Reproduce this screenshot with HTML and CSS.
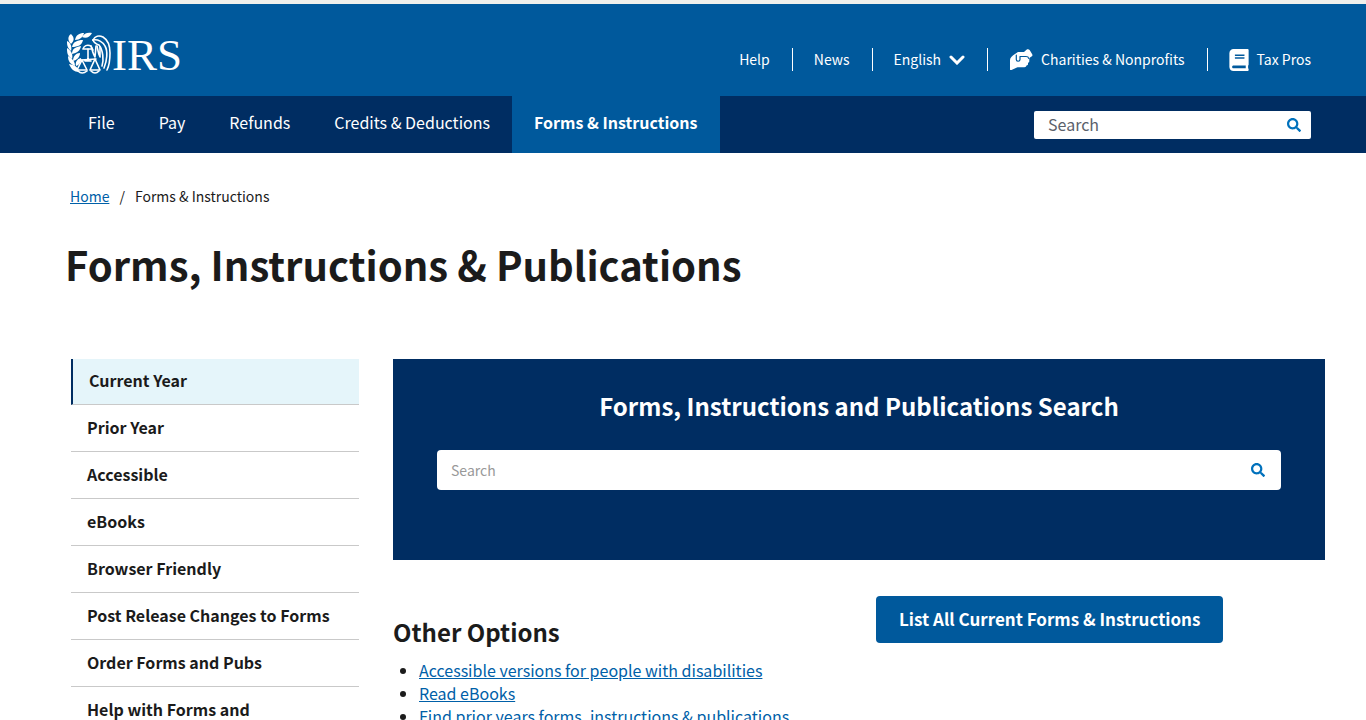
FILE: index.html
```html
<!DOCTYPE html>
<html lang="en">
<head>
  <meta charset="UTF-8" />
  <meta name="viewport" content="width=device-width, initial-scale=1.0"/>
  <title>Forms, Instructions & Publications | Internal Revenue Service</title>
  <link rel="stylesheet" href="styles.css">
</head>
<body>

  <!-- Header -->
  <header class="site-header">
    <a href="#" class="logo" aria-label="IRS home">
      <svg class="logo-mark" viewBox="0 0 44 42" aria-hidden="true">
        <!-- Laurel -->
        <g fill="#fff">
          <path d="M15 5C17 1 21 0 25 1C23 5 19 7 15 5Z"/>
          <path d="M8 8C9 3 12 1 17 1C16 5 13 8 8 8Z"/>
          <path d="M4 12C0 8 1 4 4 2C8 6 7 9 4 12Z"/>
          <path d="M5 15C6 10 10 8 16 8C15 13 11 15 5 15Z"/>
          <path d="M4 19C0 16 0 12 0 9C4 11 5 15 4 19Z"/>
          <path d="M5 22C5 17 8 15 14 14C13 19 10 21 5 22Z"/>
          <path d="M5 27C0 24 0 20 0 16C5 19 6 23 5 27Z"/>
          <path d="M6 29C6 24 9 21 13 21C13 25 10 28 6 29Z"/>
          <path d="M8 34C3 32 1 29 1 24C6 27 8 30 8 34Z"/>
          <path d="M9 34C8 30 10 27 14 26C15 30 12 33 9 34Z"/>
          <path d="M12 40C7 40 4 37 2 32C8 33 11 35 12 40Z"/>
        </g>
        <!-- Eagle and scales -->
        <g fill="none" stroke="#fff" stroke-width="1.6" stroke-linecap="round" stroke-linejoin="round">
          <path d="M16 17C17 14 20 12 24 14L26 18"/>
          <path d="M17 17H24"/>
          <path d="M26 8C28 4 32 3 36 5C41 8 43 14 43 21C43 29 42 34 40 38"/>
          <path d="M26 8C31 7 36 10 38 14C41 19 40 29 37 36"/>
          <path d="M26 8C27 11 29 12 32 13C36 18 37 28 35 34"/>
          <path d="M24 14C25 17 26 22 28 25L29 14"/>
          <path d="M30 14C31 18 31 21 33 25V15"/>
          <path d="M21 17V29M18 29H24M14 28L29 27"/>
          <path d="M15 28L10 38H20ZM28 27L23 38H33Z"/>
          <path d="M11 39Q15 43 20 39M24 39Q28 43 32 39"/>
        </g>
      </svg>
      <span class="logo-text">IRS</span>
    </a>

    <nav class="utility" aria-label="Information">
      <a href="#">Help</a>
      <a href="#">News</a>
      <button type="button">English
        <svg class="icon-chevron" viewBox="0 0 16 10" aria-hidden="true"><path d="M2 2L8 8L14 2" fill="none" stroke="currentColor" stroke-width="3" stroke-linecap="round"/></svg>
      </button>
      <a href="#">
        <svg class="icon-hands" viewBox="0 0 24 21" aria-hidden="true">
          <path fill="currentColor" d="M1 20.5V11C1 8.500 3.500 6.500 6 5L9 3H15L17.500 .8C18.500 0 20 .2 20.800 1.200L23.200 5.200C23.700 6.200 23.500 7 22.500 7.600L20.300 9V12C20.300 13 20 13.500 19 13.700V15C19 16 18.500 16.400 17.500 16.500C17 18 16 18.300 14 18.300H8.500L2.500 21C1.800 21.300 1 21.200 1 20.500Z"/>
          <path fill="none" stroke="#00599c" stroke-width="1.200" stroke-linecap="round" stroke-linejoin="round" d="M7.300 6.200V10.500C7.300 12.800 11 12.800 11 10.500V7.500H17C18.600 7.500 19.500 8.300 19.700 9.300"/>
        </svg>
        Charities &amp; Nonprofits
      </a>
      <a href="#">
        <svg class="icon-book" viewBox="0 0 448 512" aria-hidden="true"><path fill="currentColor" d="M448 360V24c0-13.3-10.7-24-24-24H96C43 0 0 43 0 96v320c0 53 43 96 96 96h328c13.3 0 24-10.7 24-24v-16c0-7.5-3.5-14.3-8.9-18.7-4.2-15.4-4.2-59.3 0-74.7 5.4-4.3 8.9-11.1 8.9-18.6zM128 134c0-3.3 2.7-6 6-6h212c3.3 0 6 2.7 6 6v20c0 3.3-2.7 6-6 6H134c-3.3 0-6-2.7-6-6v-20zm0 64c0-3.3 2.7-6 6-6h212c3.3 0 6 2.7 6 6v20c0 3.3-2.7 6-6 6H134c-3.3 0-6-2.7-6-6v-20zm253.4 250H96c-17.7 0-32-14.3-32-32 0-17.6 14.4-32 32-32h285.4c-1.9 17.1-1.9 46.9 0 64z"/></svg>
        Tax Pros
      </a>
    </nav>
  </header>

  <!-- Main navigation -->
  <div class="main-nav">
    <nav class="nav-links" aria-label="Main">
      <a href="#">File</a>
      <a href="#">Pay</a>
      <a href="#">Refunds</a>
      <a href="#">Credits &amp; Deductions</a>
      <a href="#" class="active">Forms &amp; Instructions</a>
    </nav>
    <form class="search nav-search">
      <input type="text" placeholder="Search" aria-label="Search">
      <button type="submit" aria-label="Search">
        <svg viewBox="0 0 512 512" aria-hidden="true"><path fill="currentColor" d="M505 442.7L405.3 343c-4.5-4.5-10.6-7-17-7H372c27.6-35.3 44-79.7 44-128C416 93.1 322.9 0 208 0S0 93.1 0 208s93.1 208 208 208c48.3 0 92.7-16.4 128-44v16.3c0 6.4 2.5 12.5 7 17l99.7 99.7c9.4 9.4 24.6 9.4 33.9 0l28.3-28.3c9.4-9.4 9.4-24.6.1-34zM208 336c-70.7 0-128-57.2-128-128 0-70.7 57.2-128 128-128 70.7 0 128 57.2 128 128 0 70.7-57.2 128-128 128z"/></svg>
      </button>
    </form>
  </div>

  <!-- Page title -->
  <div class="page-top">
    <nav class="breadcrumb" aria-label="Breadcrumb">
      <a href="#">Home</a>
      <span>/</span>
      <span>Forms &amp; Instructions</span>
    </nav>
    <h1>Forms, Instructions &amp; Publications</h1>
  </div>

  <!-- Content -->
  <div class="content">
    <nav class="sidebar" aria-label="Section">
      <a href="#" class="active">Current Year</a>
      <a href="#">Prior Year</a>
      <a href="#">Accessible</a>
      <a href="#">eBooks</a>
      <a href="#">Browser Friendly</a>
      <a href="#">Post Release Changes to Forms</a>
      <a href="#">Order Forms and Pubs</a>
      <a href="#">Help with Forms and Instructions</a>
    </nav>

    <main>
      <section class="search-panel">
        <h2>Forms, Instructions and Publications Search</h2>
        <form class="search panel-search">
          <input type="text" placeholder="Search" aria-label="Search forms, instructions and publications">
          <button type="submit" aria-label="Search">
            <svg viewBox="0 0 512 512" aria-hidden="true"><path fill="currentColor" d="M505 442.7L405.3 343c-4.5-4.5-10.6-7-17-7H372c27.6-35.3 44-79.7 44-128C416 93.1 322.9 0 208 0S0 93.1 0 208s93.1 208 208 208c48.3 0 92.7-16.4 128-44v16.3c0 6.4 2.5 12.5 7 17l99.7 99.7c9.4 9.4 24.6 9.4 33.9 0l28.3-28.3c9.4-9.4 9.4-24.6.1-34zM208 336c-70.7 0-128-57.2-128-128 0-70.7 57.2-128 128-128 70.7 0 128 57.2 128 128 0 70.7-57.2 128-128 128z"/></svg>
          </button>
        </form>
      </section>

      <div class="options">
        <section class="other-options">
          <h2>Other Options</h2>
          <ul>
            <li><a href="#">Accessible versions for people with disabilities</a></li>
            <li><a href="#">Read eBooks</a></li>
            <li><a href="#">Find prior years forms, instructions &amp; publications</a></li>
          </ul>
        </section>
        <div class="list-all">
          <button type="button">List All Current Forms &amp; Instructions</button>
        </div>
      </div>
    </main>
  </div>

</body>
</html>
```
FILE: styles.css
```css
:root {
  --blue: #00599c;
  --navy: #002d62;
  --text: #1b1b1b;
  --line: #c9c9c9;
}

* {
  margin: 0;
  padding: 0;
  box-sizing: border-box;
}

body {
  font-family: "Source Sans Pro", "Noto Sans CJK SC", sans-serif;
  font-size: 16px;
  line-height: 23px;
  background-color: white;
  color: var(--text);
}

button,
input {
  font: inherit;
  border: none;
}

button {
  cursor: pointer;
}

/* Header */
.site-header {
  display: flex;
  justify-content: space-between;
  align-items: flex-start;
  padding: 28px 55px 18px 67px;
  border-top: 4px solid #f0f0ec;
  background-color: var(--blue);
  color: white;
}

.logo {
  display: flex;
  gap: 1px;
  color: white;
  text-decoration: none;
}

.logo-mark {
  width: 44px;
  height: 42px;
}

.logo-text {
  font-family: "Liberation Serif", serif;
  font-size: 45px;
  line-height: 46px;
}

.utility {
  display: flex;
  align-items: center;
  padding-top: 16px;
}

.utility a,
.utility button {
  display: flex;
  align-items: center;
  gap: 8px;
  padding: 0 22px 0 21px;
  background: none;
  color: white;
  font-size: 14px;
  text-decoration: none;
  border-left: 1px solid white;
}

.utility a:first-child {
  border-left: none;
}

.utility a:last-child {
  padding-right: 0;
}

.icon-chevron {
  width: 16px;
  height: 10px;
}

.icon-hands {
  width: 24px;
  height: 21px;
}

.icon-book {
  width: 20px;
  height: 22px;
}

/* Main navigation */
.main-nav {
  display: flex;
  justify-content: space-between;
  align-items: center;
  padding: 0 55px 0 66px;
  background-color: var(--navy);
}

.nav-links {
  display: flex;
}

.nav-links a {
  padding: 15px 22px 19px;
  color: white;
  text-decoration: none;
}

.nav-links .active {
  background-color: var(--blue);
  font-weight: bold;
}

/* Search boxes */
.search {
  display: flex;
  align-items: center;
  background-color: white;
}

.search input {
  flex: 1;
  min-width: 0;
  padding: 0 14px;
  background: none;
  color: var(--text);
}

.search button {
  display: flex;
  padding: 6px 10px;
  background: none;
  color: #0071bc;
}

.search svg {
  width: 14px;
  height: 14px;
}

.nav-search {
  width: 277px;
  height: 28px;
  border-radius: 2px;
}

.nav-search input::placeholder {
  color: #5b616b;
}

.panel-search {
  height: 40px;
  border-radius: 4px;
}

.panel-search input {
  font-size: 14px;
}

.panel-search input::placeholder {
  color: #999;
}

.panel-search button {
  padding: 6px 16px;
}

/* Page title */
.page-top {
  padding: 32px 41px 0 65px;
}

.breadcrumb {
  display: flex;
  gap: 10px;
  padding-left: 5px;
  font-size: 14px;
}

.breadcrumb a,
.other-options a {
  color: #0060a8;
}

h1 {
  margin: 32px 0 71px;
  font-size: 40px;
  line-height: 48px;
}

h2 {
  font-size: 24px;
  line-height: 32px;
}

/* Content */
.content {
  display: grid;
  grid-template-columns: 288px 1fr;
  gap: 34px;
  padding: 0 41px 0 71px;
}

.sidebar a {
  display: block;
  padding: 11px 17px 12px 16px;
  border-bottom: 1px solid var(--line);
  color: var(--text);
  font-weight: bold;
  text-decoration: none;
}

.sidebar .active {
  padding-top: 10px;
  border-left: 2px solid var(--navy);
  background-color: #e5f5fa;
}

.search-panel {
  padding: 31px 44px 70px;
  background-color: var(--navy);
  color: white;
  text-align: center;
}

.search-panel h2 {
  margin-bottom: 28px;
}

.options {
  display: grid;
  grid-template-columns: 1fr 1fr;
  gap: 34px;
  padding-top: 36px;
}

.other-options h2 {
  margin: 20px 0 11px;
}

.other-options ul {
  padding-left: 26px;
}

.other-options li {
  white-space: nowrap;
}

.list-all button {
  padding: 11px 23px 13px;
  border-radius: 4px;
  background-color: var(--blue);
  color: white;
  font-size: 17px;
  font-weight: bold;
}
```
